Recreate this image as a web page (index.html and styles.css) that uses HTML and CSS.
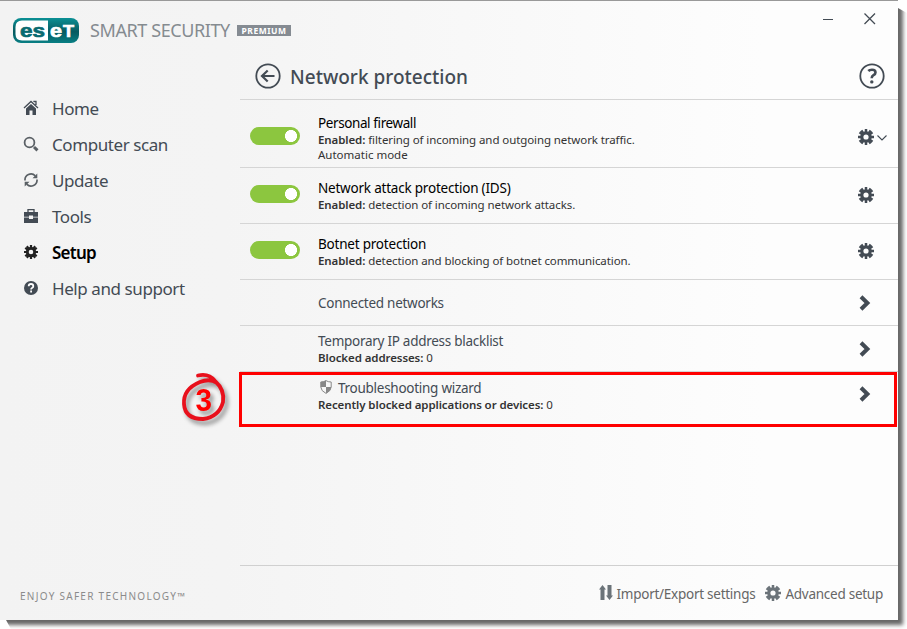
FILE: index.html
```html
<!DOCTYPE html>
<html lang="en">
<head>
    <meta charset="utf-8">
    <title>ESET Smart Security Premium</title>
    <link rel="stylesheet" href="styles.css">
</head>
<body>
    <svg class="sprite" width="0" height="0">
        <symbol id="gear" viewBox="-8 -8 16 16">
            <circle r="4.2" fill="none" stroke="currentColor" stroke-width="3.2"/>
            <g stroke="currentColor" stroke-width="2.5">
                <path d="M0 -8V-5M0 8V5M-8 0H-5M8 0H5"/>
                <path d="M0 -8V-5M0 8V5M-8 0H-5M8 0H5" transform="rotate(36)"/>
                <path d="M0 -8V-5M0 8V5M-8 0H-5M8 0H5" transform="rotate(-36)"/>
            </g>
        </symbol>
        <symbol id="chevron" viewBox="0 0 12 16">
            <path d="M2 1.8L8.4 8L2 14.2" fill="none" stroke="currentColor" stroke-width="4"/>
        </symbol>
    </svg>

    <div class="window">
        <aside class="sidebar">
            <div class="brand">
                <svg class="logo" width="66" height="25" viewBox="0 0 66 25">
                    <defs>
                        <linearGradient id="teal" x1="0" y1="0" x2="0" y2="1">
                            <stop offset="0" stop-color="#0b9095"/>
                            <stop offset="0.55" stop-color="#075a60"/>
                            <stop offset="1" stop-color="#087f84"/>
                        </linearGradient>
                    </defs>
                    <rect width="66" height="25" rx="8" fill="url(#teal)"/>
                    <path d="M9 2.5H35V22.5H9Q2.5 22.5 2.5 16V9Q2.5 2.5 9 2.5Z" fill="#fff"/>
                    <text class="logo-text" x="7" y="18.5" textLength="25" lengthAdjust="spacingAndGlyphs" fill="#086a70" stroke="#086a70">es</text>
                    <text class="logo-text" x="37" y="18.5" textLength="12" lengthAdjust="spacingAndGlyphs" fill="#fff" stroke="#fff">e</text>
                    <text class="logo-text small-cap" x="50" y="18.5" textLength="11" lengthAdjust="spacingAndGlyphs" fill="#fff" stroke="#fff">T</text>
                </svg>
                <span class="product">SMART SECURITY</span>
                <span class="edition">PREMIUM</span>
            </div>
            <nav class="menu">
                <a class="menu-item">
                    <svg width="16" height="16" viewBox="0 0 16 16"><path d="M1 8L8 1.5L15 8M11 2V1.5H13V5" fill="none" stroke="#434b54" stroke-width="1.3"/><path d="M3 8.5L8 4L13 8.5V15H9.5V10.5H6.5V15H3Z" fill="#434b54"/></svg>
                    <span>Home</span>
                </a>
                <a class="menu-item">
                    <svg width="16" height="16" viewBox="0 0 16 16"><circle cx="6.5" cy="6.5" r="4.9" fill="none" stroke="#5a6065" stroke-width="1.8"/><path d="M11 11L14.5 14.3" stroke="#5a6065" stroke-width="3"/></svg>
                    <span>Computer scan</span>
                </a>
                <a class="menu-item">
                    <svg width="16" height="16" viewBox="0 0 16 16"><path d="M2 8.5A6 6 0 0 1 12.3 3.8M14 7.5A6 6 0 0 1 3.7 12.2" fill="none" stroke="#5a6065" stroke-width="1.7"/><path d="M14.3 1.5V6.3H9.5ZM1.7 14.5V9.7H6.5Z" fill="#5a6065"/></svg>
                    <span>Update</span>
                </a>
                <a class="menu-item">
                    <svg width="16" height="16" viewBox="0 0 16 16"><path d="M5 4V1.7H11V4" fill="none" stroke="#434b54" stroke-width="1.3"/><path d="M1 4H15V8.7H10V7.5H6V8.7H1ZM1 9.5H6V11H10V9.5H15V15H1Z" fill="#434b54"/></svg>
                    <span>Tools</span>
                </a>
                <a class="menu-item active">
                    <svg width="16" height="16" viewBox="-1 -1 18 18"><use href="#gear" width="16" height="16"/></svg>
                    <span>Setup</span>
                </a>
                <a class="menu-item">
                    <svg width="16" height="16" viewBox="0 0 16 16"><circle cx="8" cy="8" r="7" fill="#434b54"/><path d="M5.7 6.3Q5.7 4 8 4T10.3 6.2Q10.3 7.3 9 8Q8.1 8.5 8.1 9.5M8.1 10.6V12.4" fill="none" stroke="#fff" stroke-width="1.8"/></svg>
                    <span>Help and support</span>
                </a>
            </nav>
            <div class="slogan">ENJOY SAFER TECHNOLOGY™</div>
        </aside>

        <main class="content">
            <div class="controls">
                <svg width="11" height="12" viewBox="0 0 11 12"><path d="M0 6.5H10" stroke="#434b54"/></svg>
                <svg width="12" height="12" viewBox="0 0 12 12"><path d="M0.5 0.5L11 11M11 0.5L0.5 11" stroke="#434b54" stroke-width="1.3"/></svg>
            </div>
            <header class="page-head">
                <svg width="26" height="26" viewBox="0 0 26 26" fill="none" stroke="#434b54"><circle cx="13" cy="13" r="11.7" stroke-width="1.8"/><path d="M19.5 13H8M12.7 7.5L7 13L12.7 18.5" stroke-width="2.2"/></svg>
                <h1>Network protection</h1>
                <svg width="26" height="26" viewBox="0 0 26 26" fill="none" stroke="#434b54"><circle cx="13" cy="13" r="11.7" stroke-width="1.8"/><path d="M9.3 8Q10.5 6.7 13 6.7Q16.5 6.7 16.5 9.4Q16.5 11 14.5 12.2Q12.7 13.3 12.7 15.3" stroke-width="2.6"/><circle cx="12.8" cy="18.9" r="1.7" fill="#434b54" stroke="none"/></svg>
            </header>

            <section class="row row-tall">
                <span class="toggle"></span>
                <div class="info">
                    <h2 class="tight">Personal firewall</h2>
                    <p><b>Enabled:</b> filtering of incoming and outgoing network traffic.</p>
                    <p class="mode">Automatic mode</p>
                </div>
                <div class="action">
                    <svg width="16" height="16"><use href="#gear"/></svg>
                    <svg class="drop" width="10" height="6" viewBox="0 0 10 6"><path d="M0.5 0.5L5 5L9.5 0.5" fill="none" stroke="#434b54" stroke-width="1.1"/></svg>
                </div>
            </section>
            <section class="row">
                <span class="toggle"></span>
                <div class="info">
                    <h2>Network attack protection (IDS)</h2>
                    <p><b>Enabled:</b> detection of incoming network attacks.</p>
                </div>
                <div class="action"><svg width="16" height="16"><use href="#gear"/></svg></div>
            </section>
            <section class="row">
                <span class="toggle"></span>
                <div class="info">
                    <h2>Botnet protection</h2>
                    <p><b>Enabled:</b> detection and blocking of botnet communication.</p>
                </div>
                <div class="action"><svg width="16" height="16"><use href="#gear"/></svg></div>
            </section>
            <section class="row row-link row-single">
                <div class="info"><h2>Connected networks</h2></div>
                <div class="action"><svg width="12" height="16"><use href="#chevron"/></svg></div>
            </section>
            <section class="row row-link">
                <div class="info">
                    <h2>Temporary IP address blacklist</h2>
                    <p><b>Blocked addresses:</b> 0</p>
                </div>
                <div class="action"><svg width="12" height="16"><use href="#chevron"/></svg></div>
            </section>
            <section class="row row-link row-wizard">
                <div class="info">
                    <h2 class="wizard-title">
                        <svg width="12" height="14" viewBox="0 0 12 14"><path d="M6 0.6Q8 2 11.2 2V7Q11 11 6 13.4Q1 11 0.8 7V2Q4 2 6 0.6Z" fill="#f7f7f7" stroke="#888"/><path d="M6 0.6V7H0.8V2Q4 2 6 0.6ZM6 7H11.2Q11 11 6 13.4Z" fill="#888"/></svg>
                        <span>Troubleshooting wizard</span>
                    </h2>
                    <p><b>Recently blocked applications or devices:</b> 0</p>
                </div>
                <div class="action"><svg width="12" height="16"><use href="#chevron"/></svg></div>
            </section>

            <footer class="bottom">
                <a>
                    <svg width="14" height="16" viewBox="0 0 14 16"><path d="M3.5 0L7 4.5H5.5V15H1.5V4.5H0ZM10.5 15L14 10.5H12.5V0H8.5V10.5H7Z" fill="#6b7379"/></svg>
                    <span>Import/Export settings</span>
                </a>
                <a>
                    <svg width="16" height="16"><use href="#gear"/></svg>
                    <span>Advanced setup</span>
                </a>
            </footer>
        </main>
    </div>

    <!-- step callout -->
    <div class="highlight"></div>
    <div class="step">
        <svg width="60" height="64" viewBox="0 0 60 64">
            <path d="M20 5.5Q31 3 37 11Q47 20 45 32Q41 47 25 49Q7 49 6 34Q5 19 22 12Q32 8 39 13" fill="none" stroke="#e8101c" stroke-width="3.8" stroke-linecap="round"/>
            <text x="17.5" y="41" textLength="16.5" lengthAdjust="spacingAndGlyphs">3</text>
        </svg>
    </div>
</body>
</html>
```
FILE: styles.css
```css
* {
    box-sizing: border-box;
}

body {
    margin: 0;
    height: 629px;
    overflow: hidden;
    background: #fff;
    font-family: "Noto Sans", "Open Sans", sans-serif;
    color: #434b54;
}

svg {
    display: block;
    flex: none;
}

.sprite {
    position: absolute;
}

.window {
    display: flex;
    width: 898px;
    height: 620px;
    border-top: 1px solid #999;
    background: linear-gradient(90deg, #f3f3f3 0, #f4f4f4 25%, #fdfdfd 85%);
    box-shadow: 4px 4px 4px 1px rgba(0, 0, 0, 0.6);
    clip-path: polygon(0 0, 898px 0, 898px 8px, 909px 14px, 909px 631px, 12px 631px, 6px 620px, 0 620px);
}

/* sidebar */

.sidebar {
    display: flex;
    flex-direction: column;
    width: 240px;
}

.brand {
    display: flex;
    align-items: center;
    height: 25px;
    margin: 17px 0 0 13px;
    white-space: nowrap;
}

.logo-text {
    font: bold 19px "Liberation Sans", sans-serif;
    stroke-width: 0.7px;
}

.small-cap {
    font-size: 16px;
}

.product {
    flex: none;
    margin: 0 0 2px 11px;
    width: 147px;
    font-size: 18px;
    line-height: 24px;
    letter-spacing: -0.4px;
    color: #858b90;
}

.edition {
    flex: none;
    width: 54px;
    height: 11px;
    background: #858b92;
    color: #fff;
    font-size: 8.5px;
    font-weight: bold;
    line-height: 11px;
    text-align: center;
    letter-spacing: 0.5px;
}

.menu {
    margin-top: 47px;
}

.menu-item {
    display: flex;
    align-items: center;
    gap: 13px;
    height: 36px;
    padding-left: 23px;
    font-size: 17px;
    letter-spacing: -0.42px;
    white-space: nowrap;
}

.menu-item.active {
    color: #000;
    font-weight: 600;
    letter-spacing: -0.75px;
}

.menu-item.active svg {
    color: #222;
}

.slogan {
    margin: auto 0 16px 20px;
    font-size: 10px;
    line-height: 16px;
    letter-spacing: 1.27px;
    color: #8b8b8b;
    white-space: nowrap;
}

/* content */

.content {
    display: flex;
    flex-direction: column;
    width: 658px;
}

.controls {
    display: flex;
    justify-content: flex-end;
    gap: 30px;
    height: 52px;
    padding: 12px 22px 0 0;
}

.page-head {
    display: flex;
    align-items: center;
    height: 47px;
    padding: 0 13px 0 15px;
    border-bottom: 1px solid #d5d5d5;
}

.page-head h1 {
    flex: 1;
    margin: 2px 0 0 9px;
    font-size: 19px;
    font-weight: 500;
    line-height: 28px;
}

.row {
    display: flex;
    height: 56px;
    padding: 11px 0 0 10px;
    border-bottom: 1px solid #d5d5d5;
    white-space: nowrap;
}

.row-tall {
    height: 68px;
    padding-top: 14px;
}

.toggle {
    flex: none;
    width: 50px;
    height: 18px;
    margin: 6px 18px 0 0;
    border-radius: 9px;
    background: radial-gradient(circle at 41px 9px, #fff 5.7px, #8cc63f 6.3px);
}

.row-tall .toggle {
    margin-top: 13px;
}

.info {
    flex: 1;
}

.info h2 {
    margin: 0;
    color: #000;
    font-size: 13.5px;
    font-weight: normal;
    line-height: 18px;
    letter-spacing: -0.21px;
}

.info h2.tight {
    letter-spacing: -0.4px;
}

.info p {
    margin: 0;
    color: #333;
    font-size: 11.5px;
    line-height: 15px;
    letter-spacing: -0.09px;
}

.info p.mode {
    letter-spacing: 0;
}

.info b {
    font-weight: 600;
}

.action {
    display: flex;
    align-items: flex-start;
    width: 40px;
    padding-top: 8px;
    color: #434b54;
}

.row-tall .action {
    padding-top: 15px;
}

.drop {
    margin: 6px 0 0 3px;
}

.row-link {
    height: 46px;
    padding: 6px 0 0 78px;
}

.row-link .info h2 {
    color: #434b54;
    letter-spacing: -0.27px;
}

.row-link .action {
    padding: 9px 0 0 1px;
}

.row-single {
    padding-top: 14px;
}

.row-single .action {
    padding-top: 1px;
}

.row-wizard {
    height: 55px;
    padding-top: 7px;
    border: none;
}

.row-wizard .action {
    padding-top: 7px;
}

.wizard-title {
    display: flex;
    gap: 6px;
    padding-left: 2px;
}

.wizard-title svg {
    margin-top: 1px;
}

.bottom {
    display: flex;
    justify-content: flex-end;
    gap: 10px;
    height: 55px;
    margin-top: auto;
    padding: 19px 15px 0 0;
    border-top: 1px solid #d0d0d0;
    color: #666;
    font-size: 13.5px;
    line-height: 18px;
    letter-spacing: -0.26px;
    white-space: nowrap;
}

.bottom a {
    display: flex;
    gap: 4px;
}

.bottom svg {
    color: #6b7379;
}

/* callout */

.highlight {
    position: absolute;
    left: 239px;
    top: 372px;
    width: 658px;
    height: 55px;
    border: 3px solid #f00;
}

.step {
    position: absolute;
    left: 178px;
    top: 370px;
    filter: drop-shadow(3px 4px 2px rgba(0, 0, 0, 0.4));
}

.step text {
    fill: #f00;
    font: bold 32px "Liberation Sans", sans-serif;
}
```
